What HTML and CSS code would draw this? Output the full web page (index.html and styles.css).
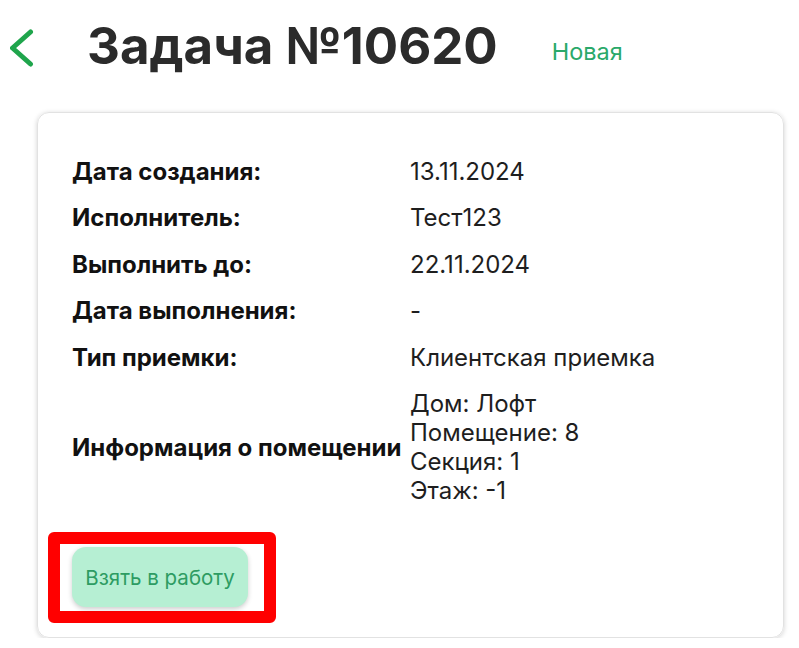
FILE: index.html
```html
<!DOCTYPE html>
<html lang="ru">
<head>
    <meta charset="UTF-8">
    <meta name="viewport" content="width=device-width, initial-scale=1.0">
    <title>Задача №10620</title>
    <link rel="stylesheet" href="styles.css">
</head>
<body>
    <div class="page">
        <div class="task-header">
            <a class="back-link" href="#">
                <svg width="26" height="40" viewBox="0 0 26 40">
                    <path d="M20.5 4 L2.5 20 L20.5 36" fill="none" stroke="#1fa54c" stroke-width="5" stroke-linecap="round" stroke-linejoin="round"/>
                </svg>
            </a>
            <h1 class="task-title">Задача №10620</h1>
            <span class="task-status">Новая</span>
        </div>

        <div class="task-card">
            <div class="task-info">
                <div class="info-label">Дата создания:</div>
                <div class="info-value">13.11.2024</div>

                <div class="info-label">Исполнитель:</div>
                <div class="info-value">Тест123</div>

                <div class="info-label">Выполнить до:</div>
                <div class="info-value">22.11.2024</div>

                <div class="info-label">Дата выполнения:</div>
                <div class="info-value">-</div>

                <div class="info-label">Тип приемки:</div>
                <div class="info-value">Клиентская приемка</div>

                <div class="info-label">Информация о помещении</div>
                <div class="info-value">
                    Дом: Лофт<br>
                    Помещение: 8<br>
                    Секция: 1<br>
                    Этаж: -1
                </div>
            </div>

            <!-- highlighted action -->
            <div class="highlight">
                <button class="take-button" type="button">Взять в работу</button>
            </div>
        </div>
    </div>
</body>
</html>
```

FILE: styles.css
```css
body {
    margin: 0;
    background: #ffffff;
    font-family: Inter, "Noto Sans", sans-serif;
}
.page {
    padding: 18px 0 0 37px;
    width: 747px;
}
.task-header {
    display: flex;
    align-items: center;
    height: 56px;
    margin-left: -27px;
}
.back-link {
    display: flex;
    width: 26px;
    margin-top: 3px;
}
.task-title {
    margin: 0 0 0 51px;
    font-size: 51px;
    font-weight: 700;
    color: #2b2b2b;
    line-height: 56px;
}
.task-status {
    margin: 11px 0 0 54px;
    font-size: 23.5px;
    color: #2aa96a;
}
.task-card {
    margin-top: 38px;
    border: 1px solid #e2e2e2;
    border-radius: 12px;
    box-shadow: 0 1px 5px rgba(0, 0, 0, 0.18);
    padding: 35px 34px 14px 34px;
}
.task-info {
    display: grid;
    grid-template-columns: 338px 1fr;
    align-items: center;
    font-size: 24px;
    line-height: 29px;
    color: #1e1e1e;
}
.info-label {
    font-weight: 700;
    color: #111111;
    padding: 8.75px 0;
}
.info-value {
    padding: 8.75px 0;
}
.highlight {
    display: inline-block;
    margin: 18px 0 0 -24px;
    padding: 3px 16px 4px 12px;
    border: 12px solid #ff0000;
    border-radius: 6px;
}
.take-button {
    display: block;
    width: 176px;
    height: 60px;
    padding: 0;
    border: none;
    border-radius: 14px;
    background-color: #b6efd3;
    box-shadow: 0 2px 5px rgba(0, 0, 0, 0.2);
    color: #2d9c62;
    font-family: Inter, "Noto Sans", sans-serif;
    font-size: 20.5px;
    cursor: pointer;
}
```
